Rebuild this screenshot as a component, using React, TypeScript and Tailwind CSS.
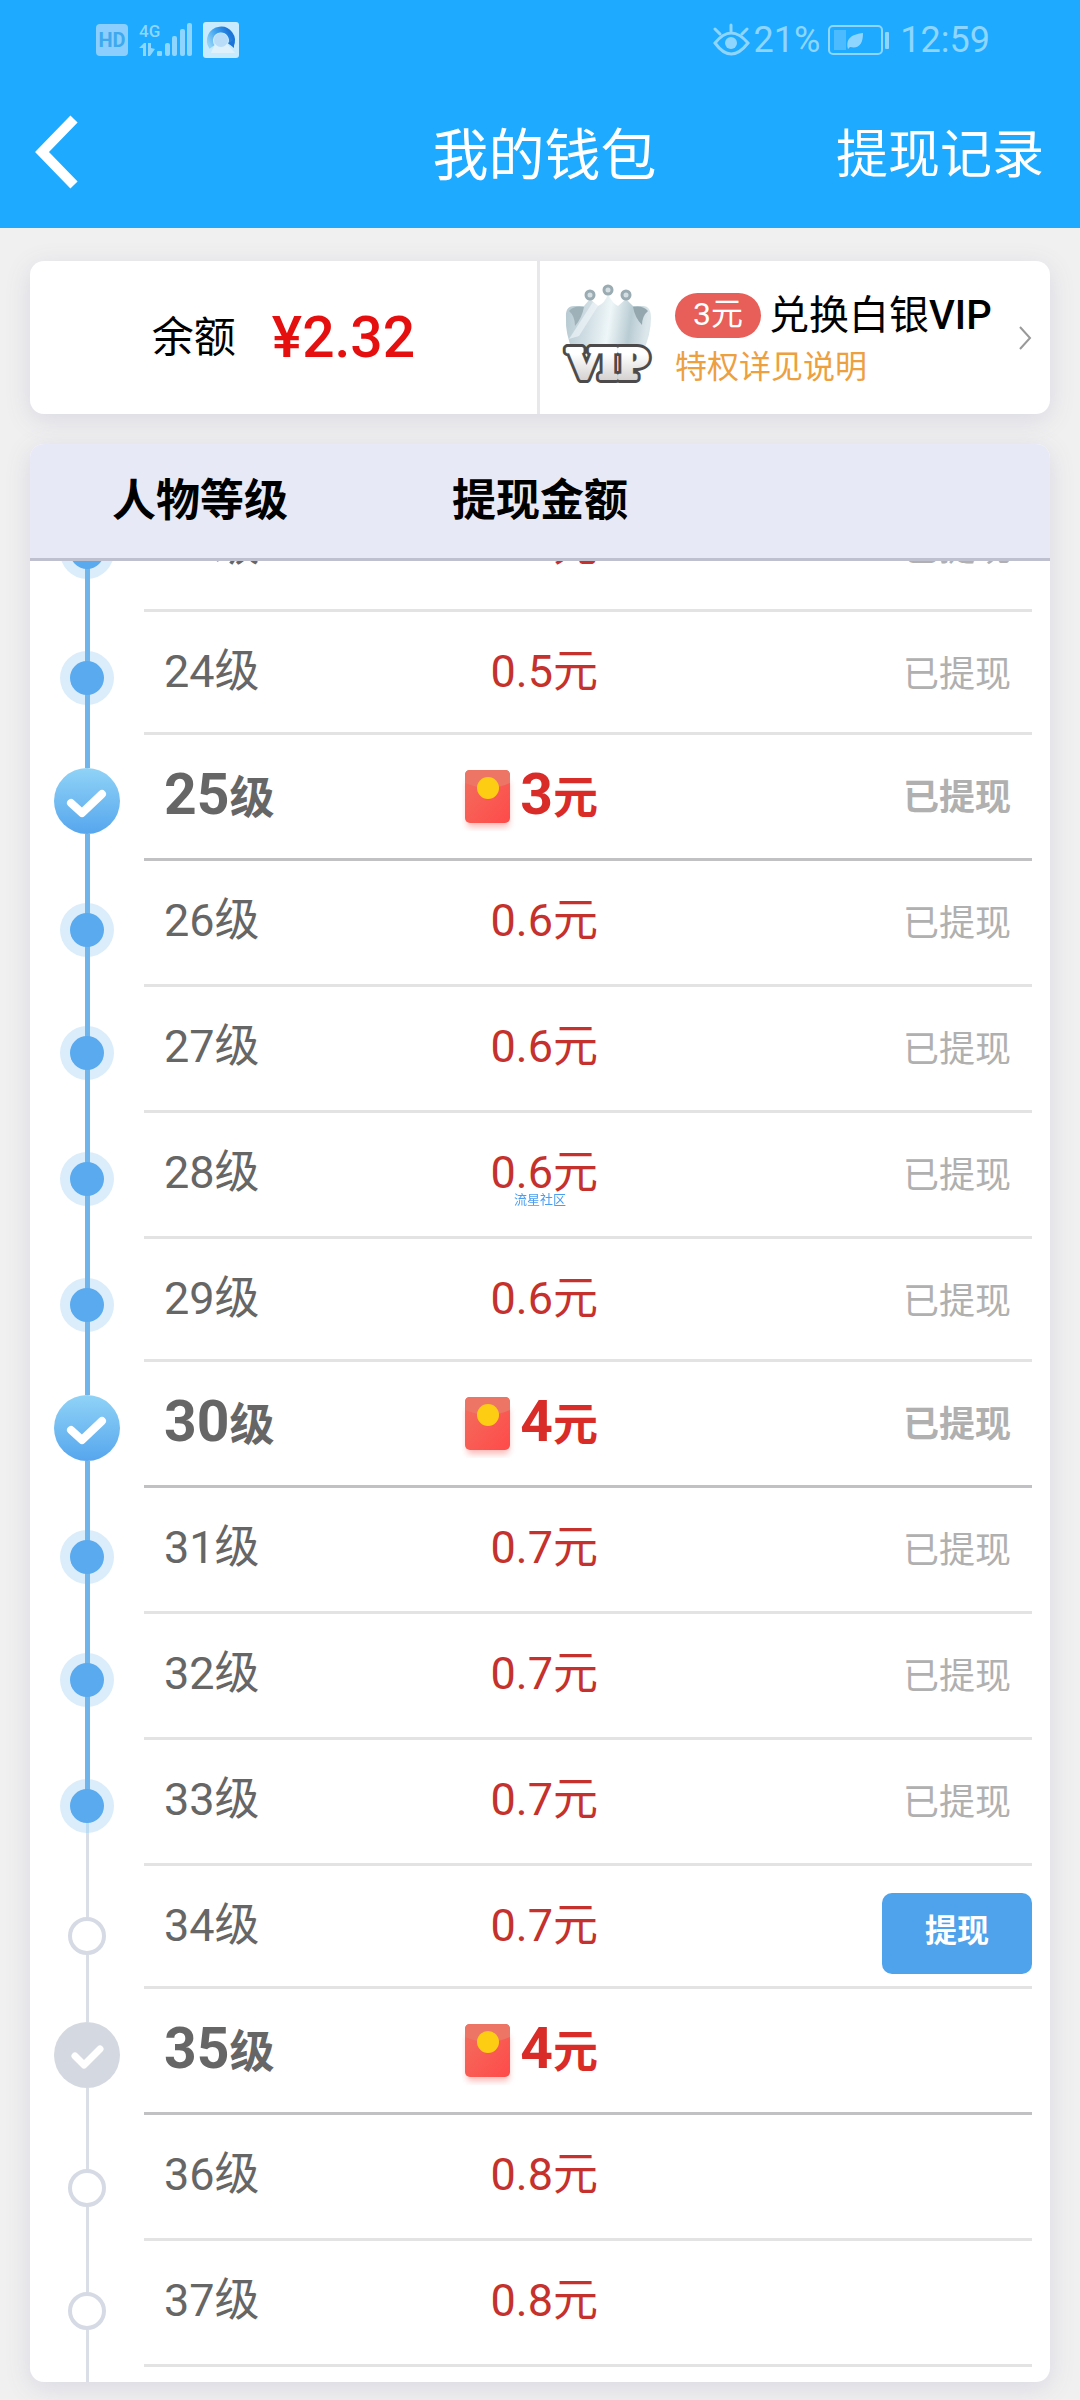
import React, { useLayoutEffect, useRef } from "react";

type LevelState = "done" | "ready" | "locked";

interface LevelRow {
  level: number;
  amount: string;
  state: LevelState;
  milestone?: boolean;
}

const rows: LevelRow[] = [
  { level: 23, amount: "0.5", state: "done" },
  { level: 24, amount: "0.5", state: "done" },
  { level: 25, amount: "3", state: "done", milestone: true },
  { level: 26, amount: "0.6", state: "done" },
  { level: 27, amount: "0.6", state: "done" },
  { level: 28, amount: "0.6", state: "done" },
  { level: 29, amount: "0.6", state: "done" },
  { level: 30, amount: "4", state: "done", milestone: true },
  { level: 31, amount: "0.7", state: "done" },
  { level: 32, amount: "0.7", state: "done" },
  { level: 33, amount: "0.7", state: "done" },
  { level: 34, amount: "0.7", state: "ready" },
  { level: 35, amount: "4", state: "locked", milestone: true },
  { level: 36, amount: "0.8", state: "locked" },
  { level: 37, amount: "0.8", state: "locked" },
  { level: 38, amount: "0.8", state: "locked" },
];

const StatusBar = () => (
  <div className="flex h-20 items-center justify-between pl-24 pr-[90px] text-[#8ed6ff]">
    <div className="flex items-center">
      <svg width="32" height="32" viewBox="0 0 32 32" role="img" aria-label="HD">
        <rect width="32" height="32" rx="4" fill="#8ccfff" />
        <text x="16" y="23" textAnchor="middle" fontFamily="Roboto, sans-serif" fontWeight="700" fontSize="20" fill="#3fa9ee">
          HD
        </text>
      </svg>
      <svg className="ml-[11px]" width="54" height="36" viewBox="0 0 54 36" fill="currentColor" role="img" aria-label="4G">
        <text x="0" y="15" fontFamily="Roboto, sans-serif" fontWeight="500" fontSize="17">
          4G
        </text>
        <path d="M0 26 L5 21 H7 V34 H4 V26 Z M9 21 H12 V26 L16 27 L11 34 H9 Z" />
        <rect x="18" y="29" width="5" height="5" rx="1" />
        <rect x="26" y="21" width="5" height="13" rx="2" />
        <rect x="33" y="14" width="5" height="20" rx="2" />
        <rect x="41" y="7" width="5" height="27" rx="2" />
        <rect x="48" y="1" width="5" height="33" rx="2" />
      </svg>
      <svg className="ml-[10px]" width="36" height="36" viewBox="0 0 36 36" aria-hidden="true">
        <defs>
          <linearGradient id="ring" x1="0" y1="0.9" x2="1" y2="0.4">
            <stop offset="0" stopColor="#8fd2f8" />
            <stop offset="0.5" stopColor="#42a5ee" />
            <stop offset="1" stopColor="#1b74d8" />
          </linearGradient>
        </defs>
        <rect width="36" height="36" rx="3" fill="#c8ebfd" />
        <path d="M8 31 H32 L24 22 H12 Z" fill="#dff2fc" />
        <path d="M9 25 A11 11 0 1 1 28 23" fill="none" stroke="url(#ring)" strokeWidth="6" />
        <path d="M25 21 L31 18 V26 Z" fill="#1b74d8" />
        <circle cx="18" cy="18" r="7" fill="#b9dcf8" />
      </svg>
    </div>
    <div className="flex items-center text-[36px] leading-[42px]">
      <svg width="37" height="34" viewBox="0 0 37 34" fill="none" stroke="currentColor" strokeWidth="3" strokeLinecap="round" aria-hidden="true">
        <path d="M2 20 Q18 0 35 20 Q18 42 2 20 Z" />
        <path d="M18 8 V2 M7 11 L2 6 M29 11 L34 6" />
        <circle cx="18" cy="20" r="6" fill="currentColor" stroke="none" />
      </svg>
      <span className="ml-1">21%</span>
      <svg className="ml-2" width="62" height="30" viewBox="0 0 62 30" aria-hidden="true">
        <rect x="1" y="1" width="53" height="28" rx="4" fill="none" stroke="currentColor" strokeWidth="2" />
        <rect x="6" y="5" width="12" height="20" fill="#4dbbff" />
        <path d="M20 24 C17 13 25 9 35 8 C35 19 31 24 22 22 Z" fill="currentColor" />
        <rect x="57" y="7" width="4" height="17" rx="1" fill="currentColor" />
      </svg>
      <span className="ml-[10px]">12:59</span>
    </div>
  </div>
);

const VipLogo = () => (
  <svg className="shrink-0" width="98" height="108" viewBox="0 0 98 108" role="img" aria-label="VIP">
    <defs>
      <linearGradient id="silver" x1="0" y1="0" x2="1" y2="0.1">
        <stop offset="0" stopColor="#b4c7cf" />
        <stop offset="0.3" stopColor="#d0dee4" />
        <stop offset="0.55" stopColor="#eef6f8" />
        <stop offset="0.8" stopColor="#b9ccd3" />
        <stop offset="1" stopColor="#dce7eb" />
      </linearGradient>
      <linearGradient id="letters" x1="0" y1="0" x2="0" y2="1">
        <stop offset="0.3" stopColor="#ffffff" />
        <stop offset="1" stopColor="#c9c5c4" />
      </linearGradient>
    </defs>
    <path
      d="M6 34 Q5 22 14 22 H24 L30 15 L38 22 Q45 19 48 10 Q52 19 58 22 L66 15 L73 22 H83 Q91 22 91 34 Q91 50 83 68 H13 Q5 49 6 34 Z"
      fill="url(#silver)"
    />
    <path d="M9 27 Q14 21 24 23 Q22 34 15 42 Q15 32 9 27 Z" fill="#9fb1b8" />
    <path d="M88 27 Q83 21 73 23 Q75 34 82 41 Q82 32 88 27 Z" fill="#94a7ae" />
    <path d="M9 55 L33 18 L38 22 L19 52 Z" fill="#f4f9fb" opacity="0.6" />
    <g fill="#d5dfe3" stroke="#9aabb2" strokeWidth="3">
      <circle cx="30" cy="11" r="4" />
      <circle cx="48" cy="6" r="4" />
      <circle cx="66" cy="11" r="4" />
    </g>
    <g
      textAnchor="middle"
      fontFamily="'DejaVu Serif', serif"
      fontWeight="700"
      fontSize="40"
      strokeLinejoin="round"
    >
      <text x="48" y="94" fill="#4c4a4b" stroke="#4c4a4b" strokeWidth="10" aria-hidden="true">
        VIP
      </text>
      <text x="48" y="94" fill="url(#letters)" stroke="url(#letters)" strokeWidth="4">
        VIP
      </text>
    </g>
  </svg>
);

const RedPacket = () => (
  <svg className="mt-1" width="54" height="64" viewBox="0 0 54 64" aria-hidden="true">
    <defs>
      <linearGradient id="packet" x1="0" y1="0" x2="1" y2="1">
        <stop offset="0" stopColor="#f26f5e" />
        <stop offset="1" stopColor="#ff4a4a" />
      </linearGradient>
      <filter id="packetGlow" x="-20%" y="-20%" width="140%" height="140%">
        <feGaussianBlur stdDeviation="3" />
      </filter>
    </defs>
    <rect x="5" y="14" width="42" height="46" rx="4" fill="#ff8a86" opacity="0.6" filter="url(#packetGlow)" />
    <rect x="3" y="3" width="45" height="53" rx="5" fill="url(#packet)" />
    <path d="M3 16 V8 Q3 3 8 3 H43 Q48 3 48 8 V16 Q26 26 3 16 Z" fill="#ec7565" />
    <circle cx="26" cy="21" r="11" fill="#fdcd14" />
  </svg>
);

const Check = ({ on }: { on: boolean }) => (
  <svg className="block" width="66" height="66" viewBox="0 0 66 66" aria-hidden="true">
    <defs>
      <linearGradient id="checkBlue" x1="0" y1="0" x2="0" y2="1">
        <stop offset="0" stopColor="#90d3f7" />
        <stop offset="1" stopColor="#56a6ee" />
      </linearGradient>
    </defs>
    <circle cx="33" cy="33" r="33" fill={on ? "url(#checkBlue)" : "#d4d8e0"} />
    {on ? (
      <path d="M17 35 L28 45 L48 26" fill="none" stroke="#fff" strokeWidth="8" strokeLinecap="round" strokeLinejoin="round" />
    ) : (
      <path d="M21 34 L30 43 L46 27" fill="none" stroke="#fff" strokeWidth="7" strokeLinecap="round" strokeLinejoin="round" />
    )}
  </svg>
);

const Dot = ({ last }: { last: boolean }) => (
  <svg className="block" width="54" height="54" viewBox="0 0 54 54" aria-hidden="true">
    <circle cx="27" cy="27" r="27" fill="#dbedfa" />
    <rect x="25" y="0" width="5" height="27" fill="#6fb4ea" />
    {last ? (
      <rect x="26" y="27" width="3" height="27" fill="#bcdcf3" />
    ) : (
      <rect x="25" y="27" width="5" height="27" fill="#6fb4ea" />
    )}
    <circle cx="27" cy="27" r="17" fill="#59aaef" />
  </svg>
);

const Marker = ({ row, prev, next }: { row: LevelRow; prev?: LevelRow; next?: LevelRow }) => {
  const blueAbove = row.state === "done";
  const blueBelow = row.state === "done" && next?.state === "done";

  // dots right after a milestone sit slightly lower
  let top = "h-[39px]";
  if (row.milestone) top = "h-[33px]";
  else if (row.state !== "done") top = prev?.milestone ? "h-[54px]" : "h-[51px]";
  else if (prev?.milestone) top = "h-[42px]";

  return (
    <div className="flex h-full flex-col items-center">
      <div className={`${top} shrink-0 ${blueAbove ? "w-[5px] bg-[#6fb4ea]" : "w-[3px] bg-[#d9dee7]"}`} />
      {row.milestone ? (
        <Check on={row.state === "done"} />
      ) : row.state === "done" ? (
        <Dot last={!blueBelow} />
      ) : (
        <div className="size-[38px] shrink-0 rounded-full border-4 border-[#d5dae4] bg-white" />
      )}
      <div className={`flex-1 ${blueBelow ? "w-[5px] bg-[#6fb4ea]" : "w-[3px] bg-[#d9dee7]"}`} />
    </div>
  );
};

const LevelItem = ({ row, prev, next }: { row: LevelRow; prev?: LevelRow; next?: LevelRow }) => {
  const big = row.milestone;

  return (
    <tr className={`flex shrink-0 pr-[18px] ${next?.milestone ? "h-[123px]" : "h-[126px]"}`}>
      <td className="w-[114px] shrink-0 p-0">
        <Marker row={row} prev={prev} next={next} />
      </td>
      <td
        className={`flex flex-1 items-start justify-between border-b-3 p-0 pl-5 ${
          big ? "border-[#c1c1c3] font-bold" : "border-[#e3e3e4]"
        }`}
      >
        <span className="flex w-1/2 items-start justify-between pt-[25px]">
          <span className="text-[45px] leading-[70px] text-[#666]">
            {big ? <span className="text-[57px]">{row.level}</span> : row.level}级
          </span>
          <span className="flex items-center text-[45px] leading-[70px] text-[#c5312c]">
            {big && <RedPacket />}
            <span className={big ? "ml-1 text-[#d92b27]" : ""}>
              {big ? <span className="text-[57px]">{row.amount}</span> : row.amount}元
            </span>
          </span>
        </span>
        {row.state === "done" && (
          <span className="pr-[21px] pt-9 text-[36px] leading-[54px] text-[#b0b0b0]">已提现</span>
        )}
        {row.state === "ready" && (
          <button className="mt-[27px] h-[81px] w-[150px] rounded-[10px] bg-[#4fa2ec] pb-1.5 text-[32px] font-bold text-white">
            提现
          </button>
        )}
      </td>
    </tr>
  );
};

const App: React.FC = () => {
  const listRef = useRef<HTMLTableSectionElement>(null);

  useLayoutEffect(() => {
    if (listRef.current) listRef.current.scrollTop = 75;
  }, []);

  return (
    <div className="flex h-screen flex-col bg-[#f0f0f0] font-['Roboto','Noto_Sans_CJK_SC',sans-serif] text-black">
      <header className="shrink-0 bg-[#1daaff]">
        <StatusBar />
        <div className="grid h-[148px] grid-cols-[1fr_auto_1fr] items-center pb-1 pl-[35px] pr-9 text-white">
          <button aria-label="返回" className="w-11">
            <svg width="43" height="74" viewBox="0 0 43 74" fill="none" stroke="currentColor" strokeWidth="10" aria-hidden="true">
              <path d="M39 4 L7 37 L39 70" />
            </svg>
          </button>
          <h1 className="pl-[10px] pt-2 text-[56px] leading-[80px]">我的钱包</h1>
          <a href="#records" className="justify-self-end pt-2 text-[52px] leading-[80px]">
            提现记录
          </a>
        </div>
      </header>

      <section className="mx-[30px] mt-[33px] grid h-[153px] shrink-0 grid-cols-2 rounded-[14px] bg-white shadow-[0_6px_26px_#d8d8e2]">
        <div className="flex items-center justify-center border-r-3 border-[#e8e8ea]">
          <span className="text-[42px]">余额</span>
          <span className="ml-9 text-[57px] font-medium text-[#e60f0f]">¥2.32</span>
        </div>
        <button className="flex items-center pl-5 pr-[18px] text-left">
          <VipLogo />
          <span className="ml-[17px] flex flex-1 flex-col pt-1">
            <span className="flex items-center whitespace-nowrap text-[40px] leading-[54px]">
              <span className="mr-2 h-[45px] rounded-full bg-[#e75f58] px-[18px] text-[32px] leading-[42px] text-white">3元</span>
              兑换白银<span className="font-medium">VIP</span>
            </span>
            <span className="text-[32px] leading-[48px] text-[#eda040]">特权详见说明</span>
          </span>
          <svg width="13" height="26" viewBox="0 0 13 26" fill="none" stroke="#999" strokeWidth="2" aria-hidden="true">
            <path d="M1 2 L11 13 L1 24" />
          </svg>
        </button>
      </section>

      <section className="mx-[30px] mb-[18px] mt-[30px] flex min-h-0 flex-1 overflow-hidden rounded-[14px] bg-white shadow-[0_6px_26px_#d8d8e2]">
        <table className="flex min-h-0 flex-1 flex-col">
          <thead className="block shrink-0 border-b-3 border-[#bfc0cf] bg-[#e8e9f7]">
            <tr className="flex h-[114px] items-center text-[44px]">
              <th className="w-1/3 p-0 font-bold">人物等级</th>
              <th className="w-1/3 p-0 font-bold">提现金额</th>
            </tr>
          </thead>
          <tbody ref={listRef} className="flex min-h-0 flex-1 flex-col overflow-y-auto [scrollbar-width:none]">
            {rows.map((row, i) => (
              <LevelItem key={row.level} row={row} prev={rows[i - 1]} next={rows[i + 1]} />
            ))}
          </tbody>
        </table>
      </section>

      <span className="pointer-events-none fixed inset-0 m-auto size-fit text-[13px] leading-4 text-[#4a9df0]">流星社区</span>
    </div>
  );
};

export default App;
